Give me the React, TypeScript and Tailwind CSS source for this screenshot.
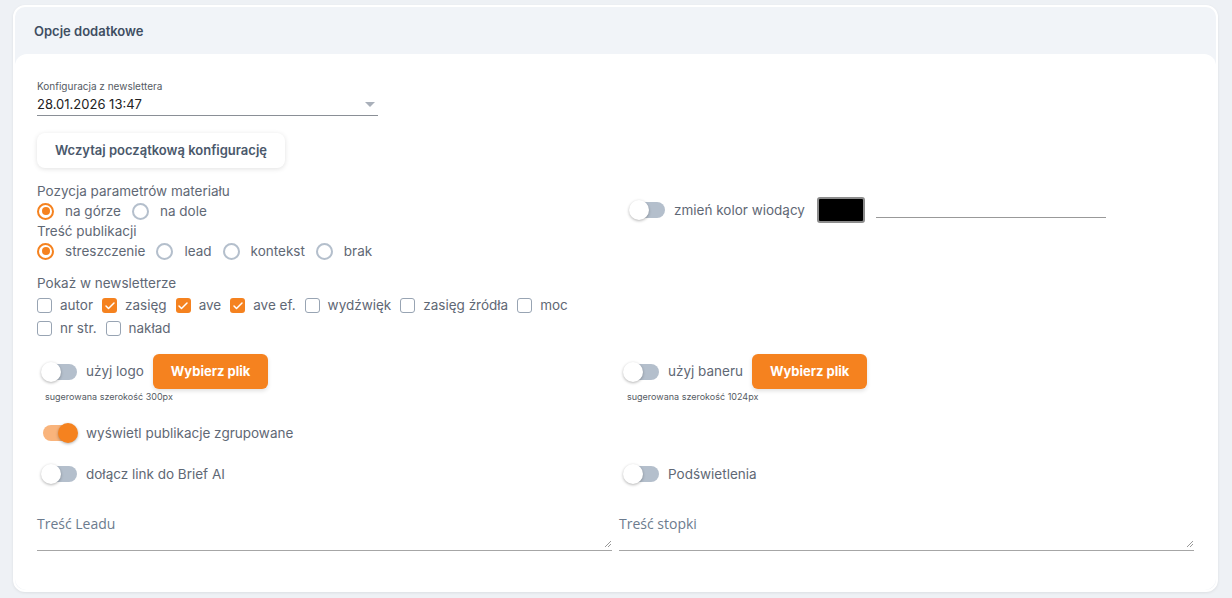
import { Check } from 'lucide-react';

const font = { fontFamily: 'Inter, "Noto Sans", sans-serif' };

function Radio({ checked, label }: { checked?: boolean; label: string }) {
  return (
    <label className="flex items-center gap-[11px] mr-[11px]">
      <span
        className={
          checked
            ? 'flex h-[17px] w-[17px] items-center justify-center rounded-full border-2 border-[#f5821f]'
            : 'h-[17px] w-[17px] rounded-full border-2 border-[#b4bfcc]'
        }
      >
        {checked && <span className="h-[8px] w-[8px] rounded-full bg-[#f5821f]" />}
      </span>
      <span className="text-[13.5px] text-[#5f6875]">{label}</span>
    </label>
  );
}

function Checkbox({ checked, label }: { checked?: boolean; label: string }) {
  return (
    <label className="flex items-center gap-[8px] mr-[9px]">
      <span
        className={
          checked
            ? 'flex h-[15px] w-[15px] items-center justify-center rounded-[3px] bg-[#f5821f]'
            : 'h-[15px] w-[15px] rounded-[3px] border-[1.5px] border-[#98a4b3]'
        }
      >
        {checked && <Check className="h-[12px] w-[12px] text-white" strokeWidth={3} />}
      </span>
      <span className="text-[13.5px] text-[#5f6875]">{label}</span>
    </label>
  );
}

function Toggle({ on, label }: { on?: boolean; label: string }) {
  return (
    <div className="flex items-center gap-[9px]">
      <span className="relative ml-[6px] block h-[16px] w-[34px]">
        <span
          className={
            on
              ? 'absolute left-0 top-0 h-[16px] w-[34px] rounded-full bg-[#f9b47c]'
              : 'absolute left-0 top-0 h-[16px] w-[34px] rounded-full bg-[#b4bfcc]'
          }
        />
        <span
          className={
            on
              ? 'absolute right-[-1px] top-[-2px] h-[20px] w-[20px] rounded-full bg-[#f5821f] shadow-[0_1px_3px_rgba(0,0,0,0.3)]'
              : 'absolute left-[-2px] top-[-2px] h-[20px] w-[20px] rounded-full bg-white shadow-[0_1px_3px_rgba(0,0,0,0.3)]'
          }
        />
      </span>
      <span className="text-[13.5px] text-[#5f6875]">{label}</span>
    </div>
  );
}

function FileButton() {
  return (
    <button className="h-[35px] rounded-[6px] bg-[#f5821f] px-[18px] text-[13px] font-bold text-white shadow-[0_2px_4px_rgba(0,0,0,0.12)]">
      Wybierz plik
    </button>
  );
}

function TextArea({ label }: { label: string }) {
  return (
    <div
      className="relative h-[38px] border-b border-[#a6a6a6]"
      style={{ fontFamily: '"Open Sans", sans-serif' }}
    >
      <span className="absolute left-0 top-0 text-[14px] text-[#6c7b8e]">{label}</span>
      <svg className="absolute bottom-[3px] right-[1px]" width="7" height="7" viewBox="0 0 7 7">
        <path d="M1 7 L7 1 M4 7 L7 4" stroke="#999" strokeWidth="1" />
      </svg>
    </div>
  );
}

export default function App() {
  return (
    <div className="h-[598px] w-[1232px] bg-[#eef1f5] pl-[13px] pr-[14px] pt-[5px]" style={font}>
      <div className="rounded-[12px] border-2 border-white bg-[#f1f4f8] pb-0 shadow-[0_1px_3px_rgba(0,0,0,0.08)]">
        <div className="flex h-[47px] items-center px-[19px] pt-[2px] text-[13px] font-semibold text-[#3f4e62]">
          Opcje dodatkowe
        </div>
        <div className="h-[536px] rounded-[12px] bg-white px-[22px] pt-[25px]">
          <div className="w-[341px]">
            <div className="text-[10px] leading-[14px] text-[#555b63]">Konfiguracja z newslettera</div>
            <div className="mt-[2px] flex h-[21px] items-center justify-between border-b border-[#8a8f96] pr-[3px]">
              <span className="text-[13px] text-[#222]">28.01.2026 13:47</span>
              <span className="mb-[2px] h-0 w-0 border-x-[5px] border-t-[5px] border-x-transparent border-t-[#a9b0ba]" />
            </div>
          </div>

          <button className="mt-[17px] h-[35px] rounded-[8px] bg-white px-[18px] text-[13px] font-semibold text-[#4a586b] shadow-[0_1px_5px_rgba(0,0,0,0.12)]">
            Wczytaj początkową konfigurację
          </button>

          <div className="mt-[14px] grid grid-cols-2 gap-x-[7px]">
            <div>
              <div className="text-[13.5px] leading-[18px] text-[#5f6875]">Pozycja parametrów materiału</div>
              <div className="flex h-[22px] items-center">
                <Radio checked label="na górze" />
                <Radio label="na dole" />
              </div>
              <div className="text-[13.5px] leading-[18px] text-[#5f6875]">Treść publikacji</div>
              <div className="flex h-[22px] items-center">
                <Radio checked label="streszczenie" />
                <Radio label="lead" />
                <Radio label="kontekst" />
                <Radio label="brak" />
              </div>
              <div className="mt-[12px] text-[13.5px] leading-[18px] text-[#5f6875]">Pokaż w newsletterze</div>
              <div className="mt-[2px] flex h-[23px] items-center">
                <Checkbox label="autor" />
                <Checkbox checked label="zasięg" />
                <Checkbox checked label="ave" />
                <Checkbox checked label="ave ef." />
                <Checkbox label="wydźwięk" />
                <Checkbox label="zasięg źródła" />
                <Checkbox label="moc" />
              </div>
              <div className="flex h-[22px] items-center">
                <Checkbox label="nr str." />
                <Checkbox label="nakład" />
              </div>
            </div>
            <div className="pl-[6px] pt-[15px]">
              <div className="flex items-center">
                <Toggle label="zmień kolor wiodący" />
                <span className="ml-[12px] h-[26px] w-[48px] rounded-[3px] border-2 border-[#8c8c8c] bg-black" />
                <span className="ml-[11px] mt-[14px] w-[230px] border-b border-[#999]" />
              </div>
            </div>
          </div>

          <div className="mt-[15px] grid grid-cols-2 gap-x-[7px]">
            <div>
              <div className="flex items-center gap-[9px]">
                <Toggle label="użyj logo" />
                <FileButton />
              </div>
              <div className="ml-[8px] mt-[1px] text-[9px] text-[#555b63]">sugerowana szerokość 300px</div>
            </div>
            <div>
              <div className="flex items-center gap-[9px]">
                <Toggle label="użyj baneru" />
                <FileButton />
              </div>
              <div className="ml-[8px] mt-[1px] text-[9px] text-[#555b63]">sugerowana szerokość 1024px</div>
            </div>
          </div>

          <div className="mt-[19px] grid grid-cols-2 gap-x-[7px]">
            <div>
              <Toggle on label="wyświetl publikacje zgrupowane" />
            </div>
            <div />
          </div>

          <div className="mt-[21px] grid grid-cols-2 gap-x-[7px]">
            <div>
              <Toggle label="dołącz link do Brief AI" />
            </div>
            <div>
              <Toggle label="Podświetlenia" />
            </div>
          </div>

          <div className="mt-[29px] grid grid-cols-2 gap-x-[7px]">
            <TextArea label="Treść Leadu" />
            <TextArea label="Treść stopki" />
          </div>
        </div>
      </div>
    </div>
  );
}
